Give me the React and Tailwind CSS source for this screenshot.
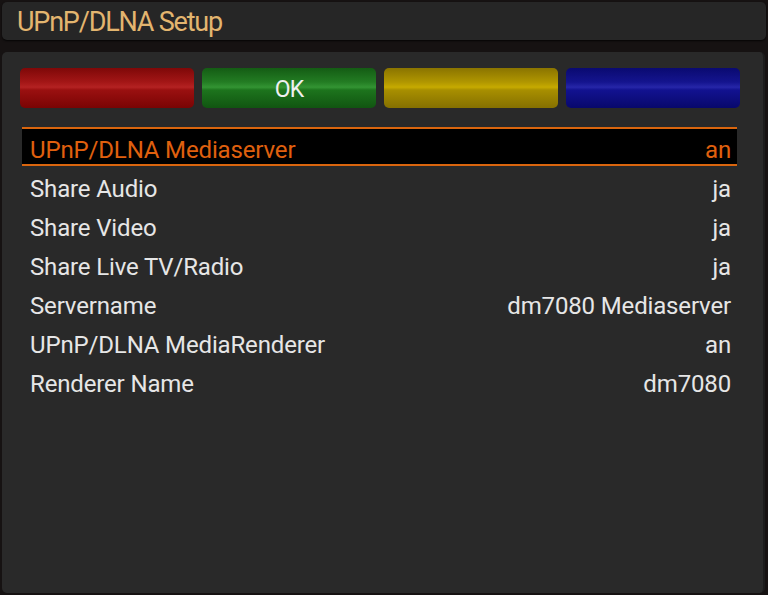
export default function App() {
  const rows = [
    ["Share Audio", "ja"],
    ["Share Video", "ja"],
    ["Share Live TV/Radio", "ja"],
    ["Servername", "dm7080 Mediaserver"],
    ["UPnP/DLNA MediaRenderer", "an"],
    ["Renderer Name", "dm7080"],
  ];
  const font = { fontFamily: "Roboto, 'Liberation Sans', sans-serif" };
  return (
    <div className="w-[768px] h-[595px] bg-[#161212] p-[2px] flex flex-col" style={font}>
      <div className="h-[38px] rounded-[5px] bg-[#262626] flex items-center pl-[15px] shadow-[0_1px_2px_rgba(0,0,0,0.8)]">
        <span className="text-[27px] leading-none text-[#e3b56f] tracking-[-1.2px] pt-[2px]">UPnP/DLNA Setup</span>
      </div>
      <div className="mt-[12px] mr-[1px] flex-1 rounded-[5px] bg-[#292929] border-r-2 border-[#1c1c1c] pl-[18px] pr-[23px] pt-[16px]">
        <div className="grid grid-cols-4 gap-[8px] h-[40px]">
          <div className="rounded-[5px] bg-[linear-gradient(180deg,#7e0808_0%,#a31616_35%,#b42222_48%,#9a1010_55%,#7a0404_100%)]" />
          <div className="rounded-[5px] bg-[linear-gradient(180deg,#145c14_0%,#237c23_35%,#339433_48%,#1d741d_55%,#115511_100%)] flex items-center justify-center">
            <span className="text-[23px] leading-none text-[#f0f0f0] tracking-[-0.8px] pt-[2px]">OK</span>
          </div>
          <div className="rounded-[5px] bg-[linear-gradient(180deg,#8a7400_0%,#b09600_35%,#c6aa00_48%,#a88f00_55%,#857000_100%)]" />
          <div className="rounded-[5px] bg-[linear-gradient(180deg,#0a0a70_0%,#14148e_35%,#2626a8_48%,#121290_55%,#08086c_100%)]" />
        </div>
        <div className="mt-[19px] ml-[2px] mr-[3px]">
          <div className="h-[39px] bg-black border-y-2 border-[#d9650e] flex items-center justify-between pl-[8px] pr-[6px] pt-[6px] text-[#e0600e] text-[24px] tracking-[-0.15px]">
            <span>UPnP/DLNA Mediaserver</span>
            <span>an</span>
          </div>
          {rows.map(([k, v]) => (
            <div key={k} className="h-[39px] flex items-center justify-between pl-[8px] pr-[6px] pt-[6px] text-[#e6e6e6] text-[24px] tracking-[-0.15px]">
              <span>{k}</span>
              <span>{v}</span>
            </div>
          ))}
        </div>
      </div>
    </div>
  );
}
